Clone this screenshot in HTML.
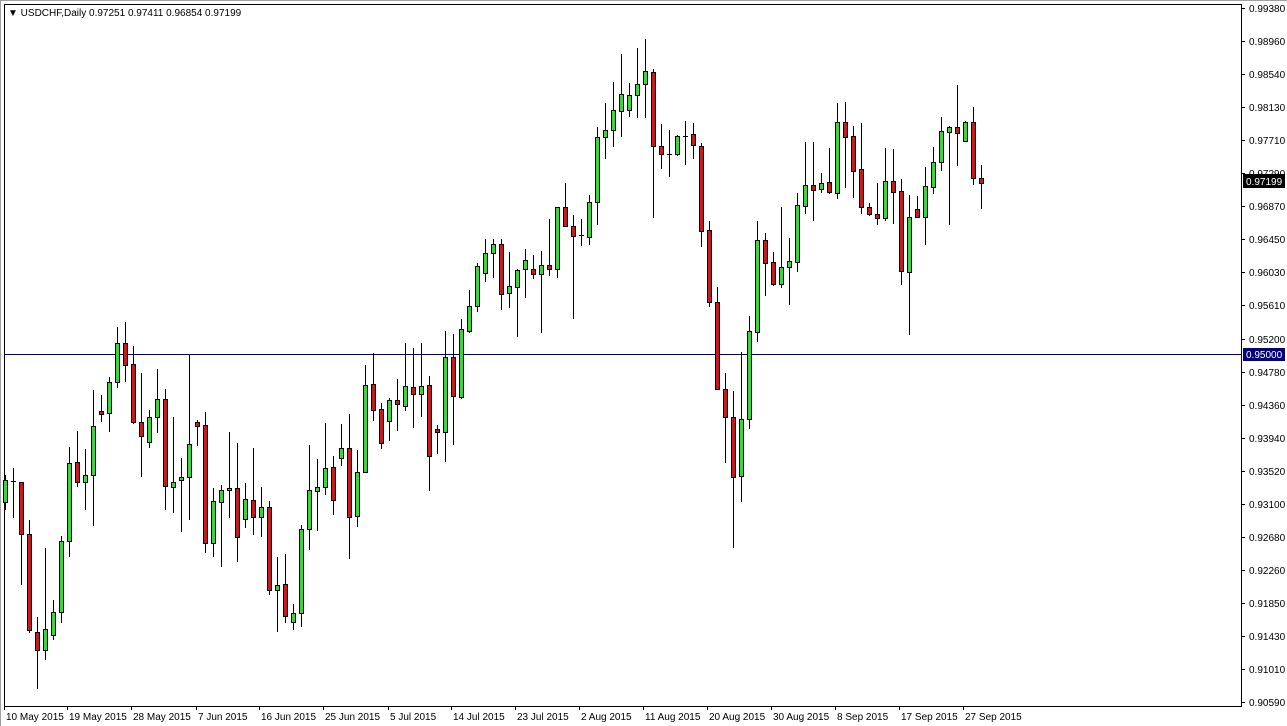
<!DOCTYPE html>
<html><head><meta charset="utf-8"><style>
html,body{margin:0;padding:0;background:#fff;width:1287px;height:726px;overflow:hidden}
svg{display:block;font-family:"Liberation Sans",sans-serif}
</style></head><body>
<svg id="s" width="1287" height="726" xmlns="http://www.w3.org/2000/svg">
<rect x="0" y="0" width="1287" height="726" fill="#fff"/>
<line x1="0.5" y1="0" x2="0.5" y2="726" stroke="#a0a0a0"/>
<line x1="0" y1="0.5" x2="1287" y2="0.5" stroke="#a0a0a0"/>
<rect x="4.5" y="4.5" width="1237" height="702" fill="none" stroke="#000"/>
<line x1="5" y1="354.5" x2="1241" y2="354.5" stroke="#000080"/>
<text x="8" y="16" font-size="10" fill="#000">▼ USDCHF,Daily  0.97251 0.97411 0.96854 0.97199</text>
<g id="c"></g><g id="ax" font-size="10" fill="#000"></g>
<rect x="1243" y="348" width="42" height="13" fill="#000080"/>
<text x="1246" y="358" font-size="10" fill="#fff">0.95000</text>
<rect x="1243" y="174" width="42" height="14" fill="#000"/>
<text x="1246" y="185" font-size="10" fill="#fff">0.97199</text>
</svg>
<script>
var d=[[475,510,502,480],[468,518,481,481],[482,585,482,534],[520,633,534,630],[617,689,632,650],[548,660,650,629],[600,640,635,612],[536,623,612,541],[447,557,541,463],[431,487,462,482],[449,510,482,475],[390,526,475,426],[395,422,411,414],[377,432,413,382],[327,388,382,343],[322,382,343,365],[346,424,364,422],[373,477,422,436],[410,448,442,417],[369,433,417,399],[389,510,399,486],[417,513,487,482],[458,532,480,477],[355,520,477,444],[420,446,422,426],[412,553,425,543],[488,557,543,501],[485,567,502,490],[432,518,490,488],[443,562,488,537],[483,528,519,499],
[448,535,500,517],[487,537,517,507],[501,595,507,590],[557,632,590,585],[554,623,584,616],[604,630,622,613],[525,627,613,529],[445,550,529,490],[459,531,491,487],[423,495,487,468],[456,515,467,500],[424,466,458,448],[414,559,448,517],[450,527,516,472],[365,473,472,385],[353,421,384,410],[403,449,409,443],[398,441,421,400],[379,431,400,404],[343,411,406,386],[348,428,387,394],[343,417,394,386],[376,491,385,456],[425,454,429,432],[331,462,432,357],[334,445,357,396],[319,399,397,329],
[290,333,331,306],[263,312,306,266],[239,282,273,253],[239,278,253,244],[239,310,244,294],[252,308,293,286],[269,337,287,270],[249,298,269,260],[255,279,269,274],[251,333,274,265],[219,276,265,269],[207,278,269,207],[183,227,207,226],[215,319,226,236],[219,246,235,235],[195,245,237,202],[127,225,202,137],[103,159,137,130],[82,147,130,110],[54,137,111,94],[83,117,110,95],[48,118,95,84],[39,118,84,71],[69,218,72,146],[124,169,146,154],[130,177,154,154],[135,156,154,136],[121,165,136,136],
[123,159,134,145],[143,247,146,231],[221,307,230,302],[287,390,302,389],[373,463,389,417],[391,548,417,477],[352,502,476,419],[316,429,419,331],[221,342,332,240],[233,296,240,263],[252,286,262,284],[207,288,284,267],[238,305,267,261],[193,272,262,205],[142,214,206,185],[142,221,185,190],[173,193,189,183],[148,194,182,192],[103,199,193,122],[102,188,122,137],[126,198,136,171],[123,214,169,207],[203,216,207,214],[183,225,214,218],[148,221,218,181],[149,224,181,192],[179,285,191,271],[195,335,272,217],[196,217,209,217],[167,245,217,186],[147,194,187,162],[117,171,162,131],[126,225,132,127],[85,166,127,133],[121,142,141,122],[107,185,122,178],[165,209,178,183]];
var h='';
for(var i=0;i<d.length;i++){var x=5+8*i,c=d[i];
h+='<line x1="'+(x+.5)+'" y1="'+c[0]+'" x2="'+(x+.5)+'" y2="'+c[1]+'" stroke="#000"/>';
var t=Math.min(c[2],c[3]),b=Math.max(c[2],c[3]);
if(b-t<1){h+='<line x1="'+(x-2)+'" y1="'+(t+.5)+'" x2="'+(x+3)+'" y2="'+(t+.5)+'" stroke="#000"/>';}
else{var col=c[3]<c[2]?'#2ee02e':'#dd1111';h+='<rect x="'+(x-1.5)+'" y="'+(t+.5)+'" width="4" height="'+(b-t)+'" fill="'+col+'" stroke="#000"/>';}}
document.getElementById('c').innerHTML=h;
var p=['0.99380','0.98960','0.98540','0.98130','0.97710','0.97290','0.96870','0.96450','0.96030','0.95610','0.95200','0.94780','0.94360','0.93940','0.93520','0.93100','0.92680','0.92260','0.91850','0.91430','0.91010','0.90590'];
var a='';
for(var j=0;j<p.length;j++){var y=Math.round(8+j*33.05);a+='<line x1="1242" y1="'+(y+.5)+'" x2="1245" y2="'+(y+.5)+'" stroke="#000"/><text x="1249" y="'+(y+4)+'">'+p[j]+'</text>';}
var dt=[[4,'10 May 2015'],[67,'19 May 2015'],[131,'28 May 2015'],[196,'7 Jun 2015'],[259,'16 Jun 2015'],[323,'25 Jun 2015'],[388,'5 Jul 2015'],[451,'14 Jul 2015'],[515,'23 Jul 2015'],[579,'2 Aug 2015'],[643,'11 Aug 2015'],[707,'20 Aug 2015'],[771,'30 Aug 2015'],[835,'8 Sep 2015'],[899,'17 Sep 2015'],[963,'27 Sep 2015']];
for(var k=0;k<dt.length;k++){a+='<line x1="'+(dt[k][0]+.5)+'" y1="706" x2="'+(dt[k][0]+.5)+'" y2="710" stroke="#000"/><text x="'+(dt[k][0]+2)+'" y="720">'+dt[k][1]+'</text>';}
document.getElementById('ax').innerHTML=a;
</script>
</body></html>
